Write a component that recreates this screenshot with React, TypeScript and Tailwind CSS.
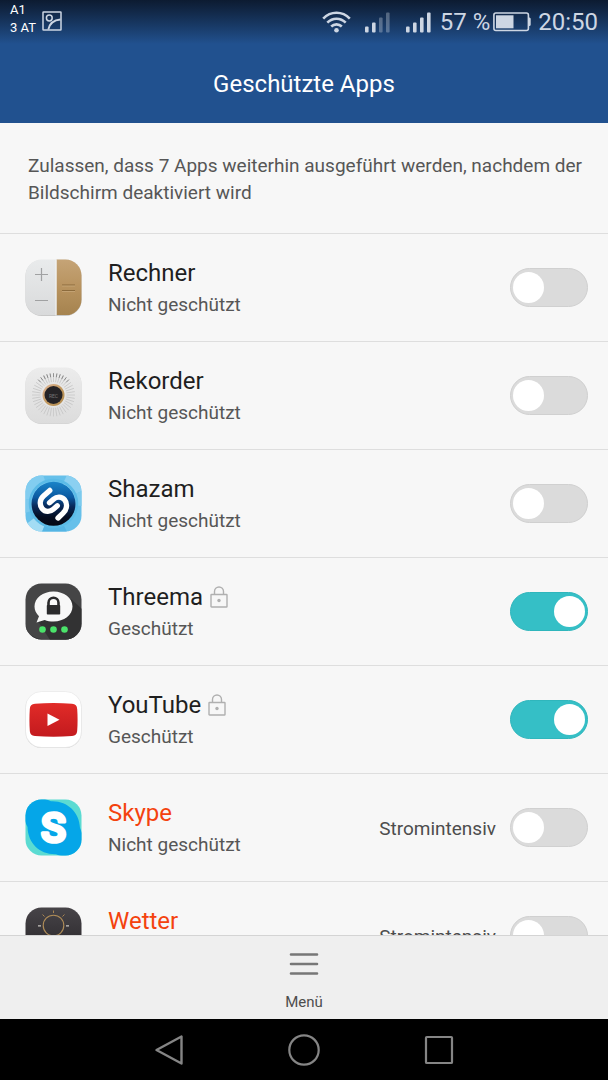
import { useState } from "react";
import type { ReactNode } from "react";

type AppEntry = {
  id: string;
  name: string;
  icon: ReactNode;
  intensive?: boolean;
};

function RechnerIcon() {
  return (
    <svg className="block size-[57px]" viewBox="0 0 57 57" aria-hidden="true">
      <defs>
        <linearGradient id="calc-light" x1="0" y1="0" x2="0" y2="1">
          <stop offset="0" stopColor="#e9ebec" />
          <stop offset="1" stopColor="#d9dadb" />
        </linearGradient>
        <linearGradient id="calc-gold" x1="0" y1="0" x2="0" y2="1">
          <stop offset="0" stopColor="#c5a477" />
          <stop offset="0.5" stopColor="#b8935f" />
          <stop offset="1" stopColor="#a5834f" />
        </linearGradient>
        <clipPath id="calc-clip">
          <rect x="0.5" y="0.5" width="56" height="56" rx="16" />
        </clipPath>
      </defs>
      <rect x="0.5" y="1" width="56" height="56" rx="16" fill="#c8c8c8" />
      <g clipPath="url(#calc-clip)">
        <rect width="57" height="56" fill="url(#calc-light)" />
        <rect x="31.5" width="26" height="56" fill="url(#calc-gold)" />
        <path d="M31 0V57" stroke="#f4f4f2" strokeWidth="1" />
      </g>
      <path d="M16.5 9V22M10 15.5H23M10 41.5H23" stroke="#a0a1a2" strokeWidth="1.2" />
      <path d="M37 26H50M37 31.5H50" stroke="#8c6b3c" strokeWidth="1.2" />
      <path d="M37 27H50M37 32.5H50" stroke="#cdaf83" strokeWidth="0.6" />
    </svg>
  );
}

function RekorderIcon() {
  const rays = Array.from({ length: 40 }, (_, i) => i * 9);
  return (
    <svg className="block size-[57px]" viewBox="0 0 57 57" aria-hidden="true">
      <defs>
        <linearGradient id="rec-bg" x1="0" y1="0" x2="0" y2="1">
          <stop offset="0" stopColor="#ececec" />
          <stop offset="1" stopColor="#dcdcdc" />
        </linearGradient>
        <linearGradient id="rec-ring" x1="0" y1="0" x2="1" y2="1">
          <stop offset="0" stopColor="#e0b89c" />
          <stop offset="0.5" stopColor="#c39a61" />
          <stop offset="1" stopColor="#b08a4d" />
        </linearGradient>
      </defs>
      <rect x="0.5" y="1" width="56" height="56" rx="16" fill="#cfcfcf" />
      <rect x="0.5" y="0.5" width="56" height="56" rx="16" fill="url(#rec-bg)" />
      {rays.map((angle) => (
        <path
          key={angle}
          d="M28.5 6.5V15"
          stroke="#c6c6c6"
          strokeWidth="0.8"
          transform={`rotate(${angle} 28.5 28)`}
        />
      ))}
      {rays
        .filter((angle) => angle < 50 || angle > 310)
        .map((angle) => (
          <path
            key={angle}
            d="M28.5 6.2V10"
            stroke="#8a8a8a"
            strokeWidth="0.9"
            transform={`rotate(${angle} 28.5 28)`}
          />
        ))}
      <circle cx="28.5" cy="28" r="12" fill="#e6e6e6" />
      <circle cx="28.5" cy="28" r="11" fill="url(#rec-ring)" />
      <circle cx="28.5" cy="28" r="9" fill="#252326" />
      <text x="28.5" y="30.5" textAnchor="middle" fontSize="5" fontFamily="Roboto, sans-serif" fill="#777577">
        REC
      </text>
    </svg>
  );
}

function ShazamIcon() {
  return (
    <svg className="block size-[57px]" viewBox="0 0 57 57" aria-hidden="true">
      <defs>
        <linearGradient id="shazam-disc" x1="0" y1="0" x2="0" y2="1">
          <stop offset="0" stopColor="#1a84c8" />
          <stop offset="0.35" stopColor="#0b5aa2" />
          <stop offset="0.55" stopColor="#082a5c" />
          <stop offset="0.8" stopColor="#050e22" />
          <stop offset="1" stopColor="#040814" />
        </linearGradient>
        <clipPath id="shazam-clip">
          <rect x="0.5" y="0.5" width="56" height="56" rx="16" />
        </clipPath>
      </defs>
      <g clipPath="url(#shazam-clip)">
        <rect width="57" height="57" fill="#66c0ea" />
        <path d="M28.5 28.5 0 24V0H18Z" fill="#82cdf0" />
        <path d="M28.5 28.5 42 0H57V16Z" fill="#8bd0f1" />
        <path d="M28.5 28.5 57 16V31Z" fill="#7ccbee" />
        <path d="M28.5 28.5 0 50V57H17Z" fill="#a3dcf4" />
        <path d="M28.5 28.5 17 57H42Z" fill="#55b5e4" />
        <path d="M28.5 28.5 0 38V24Z" fill="#7dcaee" />
        <circle cx="28.5" cy="28.5" r="23.5" fill="none" stroke="#5bbbe7" strokeWidth="2.5" />
      </g>
      <circle cx="28.5" cy="28.8" r="22" fill="url(#shazam-disc)" />
      <path
        d="M24.8 15.4 18.5 21C14.5 24.500 14.300 30.2 17.3 33.7C20.2 37.2 25 37.2 28.3 34.3L32.3 30.8"
        fill="none"
        stroke="#fff"
        strokeWidth="5.3"
        strokeLinecap="round"
      />
      <path
        d="M33 43 38.3 37.8C42.2 34.200 42.500 28.2 39.6 24.8C36.6 21.300 31.8 21.300 28.5 24.2L24.5 27.7"
        fill="none"
        stroke="#fff"
        strokeWidth="5.3"
        strokeLinecap="round"
      />
    </svg>
  );
}

function ThreemaIcon() {
  return (
    <svg className="block size-[57px]" viewBox="0 0 57 57" aria-hidden="true">
      <defs>
        <clipPath id="threema-clip">
          <rect x="0.5" y="0.5" width="56" height="56" rx="16" />
        </clipPath>
      </defs>
      <g clipPath="url(#threema-clip)">
        <rect width="57" height="57" fill="#454546" />
        <path d="M46 16 57 26V57H25L13 38Z" fill="#323233" />
        <path d="M0.5 40V57H57V40C57 49 50 56 41 56H17C8 56 0.5 49 0.5 40Z" fill="#28282a" />
      </g>
      <path
        d="M28.5 8.5C39 8.5 47.5 15 47.5 23.5S39 38.5 28.5 38.5C25.3 38.5 22.3 38 19.7 36.9L11.5 39.5L14 33.2C11.2 30.6 9.5 27.2 9.5 23.5C9.5 15 18 8.5 28.5 8.5Z"
        fill="#f8f8f8"
      />
      <path d="M23.5 23V19.8A5 5 0 0 1 33.5 19.8V23" fill="none" stroke="#2b2b2c" strokeWidth="2.6" />
      <rect x="21.8" y="22" width="13.4" height="9.5" rx="0.8" fill="#2b2b2c" />
      <circle cx="17.5" cy="46.500" r="3.3" fill="#4be36a" />
      <circle cx="28.5" cy="46.500" r="3.3" fill="#4be36a" />
      <circle cx="39.5" cy="46.500" r="3.3" fill="#4be36a" />
    </svg>
  );
}

function YouTubeIcon() {
  return (
    <svg className="block size-[57px]" viewBox="0 0 57 57" aria-hidden="true">
      <defs>
        <linearGradient id="yt-red" x1="0" y1="0" x2="0" y2="1">
          <stop offset="0" stopColor="#e12b28" />
          <stop offset="1" stopColor="#c31a1e" />
        </linearGradient>
      </defs>
      <rect x="0.5" y="1" width="56" height="56" rx="16" fill="#cfcfcf" />
      <rect x="0.5" y="0.5" width="56" height="56" rx="16" fill="#fff" stroke="#e4e4e4" strokeWidth="0.6" />
      <path
        d="M10 12.8C22 11.8 35 11.8 47 12.8C50.5 13.2 52 14.7 52.2 18C52.7 25 52.7 33 52.2 39.5C52 43 50.5 44.6 47 44.9C35 45.9 22 45.9 10 44.9C6.5 44.6 5 43 4.8 39.5C4.3 33 4.3 25 4.8 18C5 14.7 6.5 13.2 10 12.8Z"
        fill="url(#yt-red)"
      />
      <path d="M22.5 22.500 34.5 28.8 22.5 35Z" fill="#fff" />
    </svg>
  );
}

function SkypeIcon() {
  return (
    <svg className="block size-[57px]" viewBox="0 0 57 57" aria-hidden="true">
      <defs>
        <clipPath id="skype-clip">
          <rect x="0.5" y="0.5" width="56" height="56" rx="16" />
        </clipPath>
      </defs>
      <g clipPath="url(#skype-clip)">
        <rect width="57" height="57" fill="#5bdbd2" />
        <path
          d="M0 0H20C22 0.6 24 1.3 26 2.3C42 1.5 54.5 13 55 29C56 31 56.5 33 57 34V57H37C34.5 56.7 32.5 56 31 55.2C14 55.5 3 44 2.5 28C1.5 26 0.5 24 0 22Z"
          fill="#05a6e8"
        />
      </g>
      <text
        x="28.5"
        y="43"
        textAnchor="middle"
        fontSize="41"
        fontWeight="500"
        fontFamily="Roboto, sans-serif"
        fill="#fff"
        stroke="#fff"
        strokeWidth="3.6"
        strokeLinejoin="round"
      >
        S
      </text>
    </svg>
  );
}

function WetterIcon() {
  return (
    <svg className="block size-[57px]" viewBox="0 0 57 57" aria-hidden="true">
      <defs>
        <linearGradient id="weather-bg" x1="0" y1="0" x2="0" y2="1">
          <stop offset="0" stopColor="#474448" />
          <stop offset="0.5" stopColor="#353236" />
          <stop offset="1" stopColor="#2b292c" />
        </linearGradient>
      </defs>
      <rect x="0.5" y="0.5" width="56" height="56" rx="16" fill="url(#weather-bg)" />
      <circle cx="28.5" cy="18.5" r="10.3" fill="none" stroke="#b08d58" strokeWidth="1.1" />
      <path d="M28.5 3.5V6M17.5 7.5 19.5 9.5M39.5 7.5 37.5 9.5" stroke="#a88552" strokeWidth="1" />
      <path d="M13 18.8H16M41 18.8H44" stroke="#c9c5c0" strokeWidth="1.2" />
    </svg>
  );
}

function LockIcon() {
  return (
    <svg className="block h-[22px] w-[18px] shrink-0" viewBox="0 0 18 22" fill="none" role="img" aria-label="Geschützt">
      <rect x="1" y="8.5" width="16" height="12.5" rx="0.5" stroke="#b0b0b0" strokeWidth="1.4" />
      <path d="M4.5 8.500V5.500A4.5 4.5 0 0 1 13.5 5.500V8.500" stroke="#b0b0b0" strokeWidth="1.4" />
      <circle cx="9" cy="14.5" r="1.7" fill="#b0b0b0" />
    </svg>
  );
}

function SignalIcon({ strength }: { strength: number }) {
  const bars = [6, 10, 15, 20];
  return (
    <svg className="block h-[22px] w-[26px]" viewBox="0 0 26 22" aria-hidden="true">
      {bars.map((height, i) => (
        <rect
          key={height}
          x={1 + i * 7}
          y={21.5 - height}
          width="3.6"
          height={height}
          rx="1"
          fill="#cdd6e3"
          opacity={i < strength ? 1 : 0.35}
        />
      ))}
    </svg>
  );
}

function StatusBar() {
  return (
    <div className="flex h-11 items-center bg-linear-to-b from-[#0c1b31] to-[#21518f] px-[10px]">
      <div className="flex h-full gap-[6px]">
        <div className="pt-px text-[13px] leading-[18px] text-white">
          <p>A1</p>
          <p>3 AT</p>
        </div>
        <svg className="mt-[11px] block size-[20px]" viewBox="0 0 20 20" fill="none" stroke="#cdd6e3" strokeWidth="1.5" aria-hidden="true">
          <rect x="1" y="1" width="18" height="18" rx="0.5" />
          <circle cx="7.3" cy="7" r="2.9" />
          <path d="M6.3 18.500C7.5 13 12 9 18.500 8.5" strokeWidth="1.8" />
        </svg>
      </div>
      <div className="ml-auto flex items-center text-[24px] leading-[44px] text-[#cdd6e3]">
        <svg className="mr-[13px] block h-[22px] w-[29px]" viewBox="0 0 29 22" fill="none" stroke="#cdd6e3" strokeWidth="2.6" aria-hidden="true">
          <path d="M1.2 7.6C8.7 -0.2 20.3 -0.2 27.8 7.6" />
          <path d="M5.3 11.6C10.5 6.4 18.5 6.4 23.7 11.6" />
          <path d="M9.2 15.500C12.2 12.6 16.8 12.6 19.8 15.500" />
          <circle cx="14.5" cy="19.2" r="2.3" fill="#cdd6e3" stroke="none" />
        </svg>
        <SignalIcon strength={2} />
        <div className="w-[15px]" />
        <SignalIcon strength={4} />
        <span className="ml-[9px]">57 %</span>
        <svg className="mr-[7px] ml-[3px] block h-[20px] w-[38px]" viewBox="0 0 38 20" aria-hidden="true">
          <rect x="0.9" y="1" width="34.5" height="17.5" rx="2" fill="none" stroke="#cdd6e3" strokeWidth="1.6" />
          <rect x="3" y="3.3" width="17.5" height="13" fill="#cdd6e3" />
          <path d="M35.5 5.500C37 5.500 37.700 6 37.700 7V12.500C37.700 13.500 37 14 35.5 14Z" fill="#cdd6e3" />
        </svg>
        <span>20:50</span>
      </div>
    </div>
  );
}

function AppRow({ app, checked, onChange }: { app: AppEntry; checked: boolean; onChange: () => void }) {
  return (
    <li className="flex h-[108px] shrink-0 items-center border-b border-[#dedede] pr-5 pl-[25px]">
      {app.icon}
      <div className="ml-[26px] flex-1 pt-[3px]">
        <div className="flex items-center gap-[7px]">
          <label htmlFor={app.id} className={`text-[24px] leading-8 ${app.intensive ? "text-[#f4420e]" : "text-[#1f1f1f]"}`}>
            {app.name}
          </label>
          {checked && <LockIcon />}
        </div>
        <p className="text-[19px] leading-8 text-[#565656]">{checked ? "Geschützt" : "Nicht geschützt"}</p>
      </div>
      {app.intensive && <span className="mr-[14px] pt-[3px] text-[19px] leading-8 text-[#4d4d4d]">Stromintensiv</span>}
      <input
        id={app.id}
        type="checkbox"
        role="switch"
        checked={checked}
        onChange={onChange}
        className="flex h-[39px] w-[78px] shrink-0 cursor-pointer appearance-none items-center rounded-full border border-[#d0d0d0] bg-[#dbdbdb] px-[2px] before:block before:size-[31px] before:rounded-full before:bg-white before:content-[''] checked:border-[#2fb6bc] checked:bg-[#35bfc6] checked:before:translate-x-[41px]"
      />
    </li>
  );
}

function NavigationBar() {
  return (
    <nav className="flex h-[61px] shrink-0 items-center justify-center gap-[103px] bg-black">
      <button type="button" aria-label="Zurück">
        <svg className="block size-8" viewBox="0 0 32 32" fill="none" stroke="#858585" strokeWidth="2.4" strokeLinejoin="round" aria-hidden="true">
          <path d="M28.5 2.500V29.500L3.5 16Z" />
        </svg>
      </button>
      <button type="button" aria-label="Startseite">
        <svg className="block size-8" viewBox="0 0 32 32" fill="none" stroke="#858585" strokeWidth="2.2" aria-hidden="true">
          <circle cx="16" cy="16" r="14.7" />
        </svg>
      </button>
      <button type="button" aria-label="Letzte Apps">
        <svg className="block size-8" viewBox="0 0 32 32" fill="none" stroke="#858585" strokeWidth="2.2" strokeLinejoin="round" aria-hidden="true">
          <rect x="3" y="3" width="26" height="26" rx="0.8" />
        </svg>
      </button>
    </nav>
  );
}

const apps: AppEntry[] = [
  { id: "rechner", name: "Rechner", icon: <RechnerIcon /> },
  { id: "rekorder", name: "Rekorder", icon: <RekorderIcon /> },
  { id: "shazam", name: "Shazam", icon: <ShazamIcon /> },
  { id: "threema", name: "Threema", icon: <ThreemaIcon /> },
  { id: "youtube", name: "YouTube", icon: <YouTubeIcon /> },
  { id: "skype", name: "Skype", icon: <SkypeIcon />, intensive: true },
  { id: "wetter", name: "Wetter", icon: <WetterIcon />, intensive: true },
];

export default function App() {
  const [enabled, setEnabled] = useState<string[]>(["threema", "youtube"]);

  const toggle = (id: string) => {
    setEnabled((ids) => (ids.includes(id) ? ids.filter((other) => other !== id) : [...ids, id]));
  };

  return (
    <div className="flex h-screen flex-col bg-[#f7f7f7] font-[Roboto,sans-serif]">
      <header className="h-[123px] shrink-0 bg-[#21518f]">
        <StatusBar />
        <h1 className="text-center text-[24px] leading-[80px] text-white">Geschützte Apps</h1>
      </header>
      <main className="min-h-0 flex-1 overflow-y-auto [scrollbar-width:none]">
        <p className="border-b border-[#dedede] pt-[29px] pr-4 pb-[27px] pl-7 text-[19px] leading-[27px] text-[#565656]">
          Zulassen, dass 7 Apps weiterhin ausgeführt werden, nachdem der Bildschirm deaktiviert wird
        </p>
        <ul className="flex flex-col">
          {apps.map((app) => (
            <AppRow key={app.id} app={app} checked={enabled.includes(app.id)} onChange={() => toggle(app.id)} />
          ))}
        </ul>
      </main>
      <footer className="flex h-[84px] shrink-0 justify-center border-t border-[#d4d4d4] bg-[#efefef]">
        <button type="button" className="flex flex-col items-center px-4 pt-[16px] text-[15px] leading-5 text-[#4d4d4d]">
          <svg className="mb-4 block h-[24px] w-[30px]" viewBox="0 0 30 24" fill="none" stroke="#777" strokeWidth="2.6" strokeLinecap="round" aria-hidden="true">
            <path d="M2 2.500H28M2 12H28M2 21.500H28" />
          </svg>
          Menü
        </button>
      </footer>
      <NavigationBar />
    </div>
  );
}
